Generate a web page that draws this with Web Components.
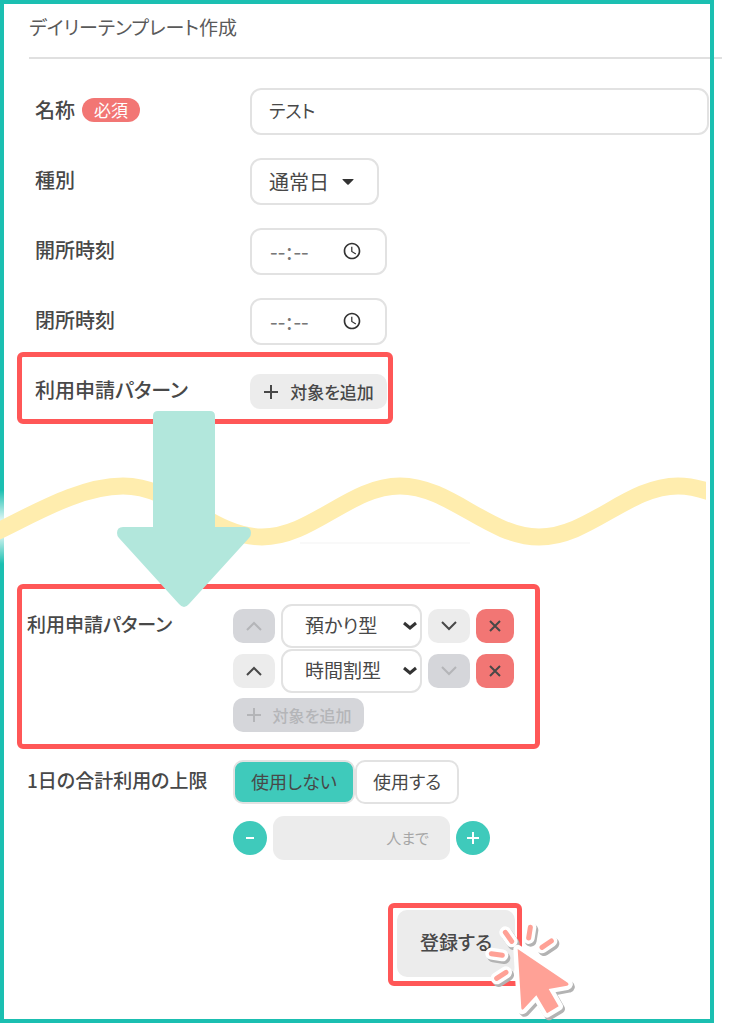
<!DOCTYPE html>
<html lang="ja">
<head>
<meta charset="utf-8">
<meta name="viewport" content="width=device-width, initial-scale=1">
<title>デイリーテンプレート作成</title>
<style>
  body {
    margin: 0;
    background: #fff;
    color: #484848;
    font-family: "Noto Sans CJK JP", sans-serif;
    font-size: 20px;
    line-height: 24px;
    font-feature-settings: "palt";
  }
  .day-form {
    display: grid;
    gap: 23px;
    padding: 29px 1px 0 31px;
  }
  .pattern-add {
    margin: 7px 0 0 13px;
  }
  .pattern-list {
    --label-width: 206px;
    margin-left: 13px;
    font-size: 19px;
  }
  limit-field {
    --label-width: 206px;
    margin: 11px 0 0 23px;
    font-size: 19px;
  }
  .submit {
    margin: 43px 0 33px 384px;
    font-size: 19px;
  }
</style>
</head>
<body>
<page-frame>
  <page-title>デイリーテンプレート作成</page-title>
  <div class="day-form">
    <name-field label="名称" value="テスト"></name-field>
    <type-field label="種別" value="通常日"></type-field>
    <time-field label="開所時刻"></time-field>
    <time-field label="閉所時刻"></time-field>
  </div>
  <highlight-box class="pattern-add">
    <pattern-add label="利用申請パターン"></pattern-add>
  </highlight-box>
  <wave-divider></wave-divider>
  <highlight-box class="pattern-list">
    <pattern-list label="利用申請パターン"></pattern-list>
  </highlight-box>
  <limit-field label="1日の合計利用の上限"></limit-field>
  <highlight-box class="submit">
    <submit-button>登録する</submit-button>
    <click-cursor></click-cursor>
  </highlight-box>
</page-frame>

<script>
// styles shared by every control
const controlStyles = `
  *, *::before, *::after { box-sizing: border-box; }
  button, input, select {
    margin: 0;
    font: inherit;
    font-feature-settings: inherit;
    color: inherit;
  }
  button {
    display: inline-flex;
    align-items: center;
    justify-content: center;
    padding: 0;
    border: 0;
    border-radius: 10px;
    background: #ececec;
    cursor: pointer;
  }
  button:disabled {
    background: #d5d6da;
    color: #b4b5b8;
    cursor: default;
  }
  svg {
    display: block;
    flex: none;
    fill: none;
    stroke: currentColor;
    stroke-width: 2;
  }
  .box {
    height: 47px;
    border: 2px solid #e2e2e2;
    border-radius: 11px;
    background: #fff;
  }
`;

const plusIcon = `<svg width="16" height="16" viewBox="0 0 16 16"><path d="M8 1v14M1 8h14"/></svg>`;
const upIcon = `<svg width="18" height="12" viewBox="0 0 18 12"><path d="M2 10l7-7 7 7"/></svg>`;
const downIcon = `<svg width="18" height="12" viewBox="0 0 18 12"><path d="M2 2l7 7 7-7"/></svg>`;
const closeIcon = `<svg width="12" height="12" viewBox="0 0 12 12"><path d="M1 1l10 10M11 1L1 11"/></svg>`;

class PageFrame extends HTMLElement {
  constructor() {
    super();
    this.attachShadow({ mode: "open" });
    this.shadowRoot.innerHTML = `
      <style>
        :host {
          display: flow-root;
          margin-right: 34px;
          border: 4px solid #1bbfb1;
        }
      </style>
      <slot></slot>
    `;
  }
}
customElements.define("page-frame", PageFrame);

class PageTitle extends HTMLElement {
  constructor() {
    super();
    this.attachShadow({ mode: "open" });
    this.shadowRoot.innerHTML = `
      <style>
        :host {
          display: block;
          position: relative;
          z-index: -1;
          margin: 0 -12px 0 25px;
          padding: 11px 0 18px;
          border-bottom: 2px solid #e0e0e0;
        }
        h1 {
          margin: 0;
          font-size: 19px;
          font-weight: 400;
          line-height: 24px;
          color: #5a5a5a;
        }
      </style>
      <h1><slot></slot></h1>
    `;
  }
}
customElements.define("page-title", PageTitle);

class HighlightBox extends HTMLElement {
  constructor() {
    super();
    this.attachShadow({ mode: "open" });
    this.shadowRoot.innerHTML = `
      <style>
        :host {
          display: block;
          position: relative;
          box-sizing: border-box;
          width: fit-content;
          border: 5px solid #ff5757;
          border-radius: 6px;
        }
      </style>
      <slot></slot>
    `;
  }
}
customElements.define("highlight-box", HighlightBox);

// base class: label on the left, control on the right
class FieldRow extends HTMLElement {
  constructor() {
    super();
    this.attachShadow({ mode: "open" });
  }

  connectedCallback() {
    this.shadowRoot.innerHTML = `
      <style>
        ${controlStyles}
        :host {
          display: grid;
          grid-template-columns: var(--label-width, 215px) 1fr;
          align-items: start;
        }
        .label {
          display: flex;
          align-items: center;
          gap: 7px;
          padding-top: 10px;
          font-weight: 500;
          white-space: nowrap;
        }
        ${this.styles()}
      </style>
      <label class="label" for="control">${this.getAttribute("label")}${this.badge()}</label>
      ${this.control()}
    `;
  }

  styles() { return ""; }
  badge() { return ""; }
  control() { return ""; }
}

class NameField extends FieldRow {
  styles() {
    return `
      .badge {
        padding: 0 12px;
        border-radius: 12px;
        background: #f27674;
        color: #fff;
        font-size: 17px;
        font-weight: 400;
      }
      input { width: 100%; padding: 0 17px 4px; font-size: 18px; }
    `;
  }
  badge() {
    return `<span class="badge">必須</span>`;
  }
  control() {
    return `<input class="box" id="control" type="text" value="${this.getAttribute("value")}">`;
  }
}
customElements.define("name-field", NameField);

class TypeField extends FieldRow {
  styles() {
    return `
      .select { display: grid; width: 129px; align-items: center; }
      .select > * { grid-area: 1 / 1; }
      select { width: 100%; padding: 0 17px; appearance: none; }
      svg { justify-self: end; margin-right: 25px; fill: #333; stroke: none; pointer-events: none; }
    `;
  }
  control() {
    return `
      <div class="select">
        <select class="box" id="control"><option>${this.getAttribute("value")}</option></select>
        <svg width="12" height="6" viewBox="0 0 12 6"><path d="M1 0h10q1 0 .4.8L6.700 5.500q-.7.600-1.400 0L.6.8Q0 0 1 0z"/></svg>
      </div>
    `;
  }
}
customElements.define("type-field", TypeField);

class TimeField extends FieldRow {
  styles() {
    return `
      input { width: 137px; padding: 0 23px 3px 17px; color: #777; font-size: 22px; }
      input::-webkit-datetime-edit-ampm-field { display: none; }
      input::-webkit-calendar-picker-indicator { width: 20px; height: 20px; margin: 2px 0 0; padding: 0; opacity: .8; }
    `;
  }
  control() {
    return `<input class="box" id="control" type="time">`;
  }
}
customElements.define("time-field", TimeField);

class PatternAdd extends FieldRow {
  styles() {
    return `
      :host { padding: 17px 1px 10px 13px; }
      .label { padding-top: 4px; }
      button { width: 137px; height: 35px; gap: 11px; font-size: 17px; font-weight: 500; }
    `;
  }
  control() {
    return `<button id="control" type="button">${plusIcon}対象を追加</button>`;
  }
}
customElements.define("pattern-add", PatternAdd);

class PatternList extends FieldRow {
  styles() {
    return `
      :host { padding: 15px 21px 12px 5px; }
      .label { padding-top: 8px; }
      .list { display: grid; gap: 1px; justify-items: start; }
      .item { display: flex; align-items: center; gap: 6px; }
      .item button { width: 42px; height: 34px; }
      .item .remove { width: 38px; background: #f27674; }
      .select { display: grid; width: 141px; align-items: center; }
      .select > * { grid-area: 1 / 1; }
      .select svg { justify-self: end; margin-right: 5px; stroke-width: 3; color: #333; pointer-events: none; }
      select { width: 100%; appearance: none; }
      .box { height: 44px; padding: 0 22px 3px; }
      .add { width: 131px; height: 34px; margin-top: 4px; gap: 11px; font-size: 16px; font-weight: 500; }
    `;
  }
  item(id, value, first, last) {
    return `
      <div class="item">
        <button type="button" aria-label="上へ" ${first ? "disabled" : ""}>${upIcon}</button>
        <div class="select">
          <select class="box" id="${id}" aria-label="${value}"><option>${value}</option></select>
          <svg width="14" height="10" viewBox="0 0 14 10"><path d="M1 2l6 5 6-5"/></svg>
        </div>
        <button type="button" aria-label="下へ" ${last ? "disabled" : ""}>${downIcon}</button>
        <button type="button" class="remove" aria-label="削除">${closeIcon}</button>
      </div>
    `;
  }
  control() {
    return `
      <div class="list">
        ${this.item("control", "預かり型", true, false)}
        ${this.item("second", "時間割型", false, true)}
        <button class="add" type="button" disabled>${plusIcon}対象を追加</button>
      </div>
    `;
  }
}
customElements.define("pattern-list", PatternList);

class LimitField extends FieldRow {
  styles() {
    return `
      .limit { display: grid; gap: 12px; }
      .toggle { display: flex; }
      .toggle button {
        height: 44px;
        padding: 0 16px 3px;
        border: 2px solid #e2e2e2;
        background: #fff;
        font-size: 18px;
      }
      .toggle .on { background: #3fcabb; }
      .label { padding-top: 8px; }
      .count { display: flex; align-items: center; gap: 6px; }
      .count button { width: 34px; height: 34px; border-radius: 50%; background: #3fcabb; color: #fff; }
      .amount {
        display: flex;
        align-items: center;
        width: 177px;
        height: 44px;
        padding: 0 21px;
        border-radius: 11px;
        background: #ececec;
        color: #a6a6a6;
        font-size: 15px;
        white-space: nowrap;
      }
      .amount input { flex: 1; min-width: 0; border: 0; padding: 0; background: none; }
    `;
  }
  control() {
    return `
      <div class="limit">
        <div class="toggle">
          <button class="on" type="button" aria-pressed="true">使用しない</button>
          <button type="button" aria-pressed="false">使用する</button>
        </div>
        <div class="count">
          <button type="button" aria-label="減らす"><svg width="12" height="12" viewBox="0 0 12 12"><path d="M2 6h8"/></svg></button>
          <label class="amount"><input id="control" type="text" disabled>人まで</label>
          <button type="button" aria-label="増やす"><svg width="12" height="12" viewBox="0 0 12 12"><path d="M6 0v12M0 6h12"/></svg></button>
        </div>
      </div>
    `;
  }
}
customElements.define("limit-field", LimitField);

// wavy break between the two steps, with the arrow lying over it
class WaveDivider extends HTMLElement {
  constructor() {
    super();
    this.attachShadow({ mode: "open" });
    this.shadowRoot.innerHTML = `
      <style>
        :host { display: block; position: relative; z-index: 1; height: 160px; margin-left: -4px; margin-right: 4px; }
        svg { display: block; }
        .wave { width: 100%; height: 100%; }
        .arrow { position: absolute; left: 117px; top: -13px; }
      </style>
      <svg class="wave" viewBox="0 0 706 160" preserveAspectRatio="none">
        <defs>
          <linearGradient id="fade" x1="0" y1="0" x2="0" y2="1">
            <stop offset="0" stop-color="#fff" stop-opacity="0"/>
            <stop offset=".4" stop-color="#fff" stop-opacity=".85"/>
            <stop offset=".6" stop-color="#fff" stop-opacity=".85"/>
            <stop offset="1" stop-color="#fff" stop-opacity="0"/>
          </linearGradient>
        </defs>
        <rect x="0" y="66" width="4" height="74" fill="url(#fade)"/>
        <path d="M300 119h170" stroke="#f3f3f3"/>
        <path d="M-6 109C34 90 80 62 123 62C175 62 212 113 262 113C312 113 350 62 400 62C450 62 489 113 539 113C589 113 628 62 678 62Q692 62 710 68"
          fill="none" stroke="#ffedae" stroke-width="17"/>
      </svg>
      <svg class="arrow" width="134" height="196" viewBox="0 0 134 196">
        <path d="M41 0H93Q98 0 98 5V116H128Q134 116 134 122Q134 125 132 127L72 193Q67 199 62 193L2 127Q0 125 0 122Q0 116 6 116H36V5Q36 0 41 0z" fill="#b2e7dc"/>
      </svg>
    `;
  }
}
customElements.define("wave-divider", WaveDivider);

class SubmitButton extends HTMLElement {
  constructor() {
    super();
    this.attachShadow({ mode: "open" });
    this.shadowRoot.innerHTML = `
      <style>
        ${controlStyles}
        :host { display: block; padding: 2px 2px 4px 4px; }
        button { width: 118px; height: 67px; padding-bottom: 3px; font-weight: 500; }
      </style>
      <button type="button"><slot></slot></button>
    `;
  }
}
customElements.define("submit-button", SubmitButton);

class ClickCursor extends HTMLElement {
  constructor() {
    super();
    this.attachShadow({ mode: "open" });
    this.shadowRoot.innerHTML = `
      <style>
        :host { display: block; position: absolute; left: 90px; top: 15px; pointer-events: none; }
        svg { display: block; overflow: visible; }
      </style>
      <svg width="93" height="100" viewBox="340 130 279 300" fill="none" stroke-linecap="round" stroke-linejoin="round">
        <defs>
          <path id="pointer" d="M444 208L594 309Q600 315 592 318L537 328L567 380L532 401L500 347L461 389Q456 393 455 386z"/>
          <path id="rays" d="M407 158L426 185M482 143L477 175M517 203L545 184M365 222L398 227M381 296L409 278"/>
        </defs>
        <g transform="translate(6 8)" stroke="#b3b3b3">
          <use href="#rays" stroke-width="36"/>
          <use href="#pointer" fill="#b3b3b3" stroke-width="26"/>
        </g>
        <g stroke="#fff">
          <use href="#rays" stroke-width="36"/>
          <use href="#pointer" stroke-width="26"/>
        </g>
        <use href="#rays" stroke="#ffa196" stroke-width="15"/>
        <use href="#pointer" fill="#ffa196"/>
      </svg>
    `;
  }
}
customElements.define("click-cursor", ClickCursor);
</script>
</body>
</html>
